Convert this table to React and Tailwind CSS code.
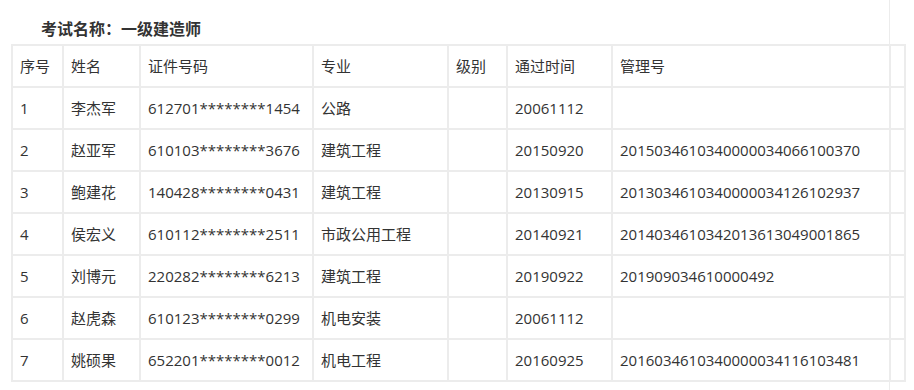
import React from "react";

const rows = [
  ["1", "李杰军", "612701********1454", "公路", "", "20061112", ""],
  ["2", "赵亚军", "610103********3676", "建筑工程", "", "20150920", "20150346103400000340661" + "00370"],
  ["3", "鲍建花", "140428********0431", "建筑工程", "", "20130915", "20130346103400000341261" + "02937"],
  ["4", "侯宏义", "610112********2511", "市政公用工程", "", "20140921", "20140346103420136130490" + "01865"],
  ["5", "刘博元", "220282********6213", "建筑工程", "", "20190922", "201909034610000492"],
  ["6", "赵虎森", "610123********0299", "机电安装", "", "20061112", ""],
  ["7", "姚硕果", "652201********0012", "机电工程", "", "20160925", "20160346103400000341161" + "03481"],
];

const header = ["序号", "姓名", "证件号码", "专业", "级别", "通过时间", "管理号", ""];

function Cell({ children }) {
  return (
    <div className="bg-white h-[40px] flex items-center pl-[7px] text-[15px] text-[#333] whitespace-nowrap overflow-hidden">
      {children}
    </div>
  );
}

export default function App() {
  return (
    <div
      className="w-[890px] h-[390px] border-r border-[#ececec] bg-white"
      style={{ fontFamily: '"Open Sans", "Noto Sans CJK SC", sans-serif' }}
    >
      <div
        className="h-[44px] pl-[41px] pt-[16px] leading-[24px] text-[16px] font-bold text-[#333]"
        style={{ fontFamily: '"Noto Sans CJK SC", sans-serif' }}
      >
        考试名称：一级建造师
      </div>
      <div className="ml-[11px] w-[895px] grid grid-cols-[49px_75px_171px_133px_57px_103px_276px_13px] gap-[2px] p-[2px] bg-[#ececec]">
        {header.map((h, i) => (
          <Cell key={"h" + i}>{h}</Cell>
        ))}
        {rows.map((r, ri) =>
          [...r, ""].map((c, ci) => <Cell key={ri + "-" + ci}>{c}</Cell>)
        )}
      </div>
    </div>
  );
}
